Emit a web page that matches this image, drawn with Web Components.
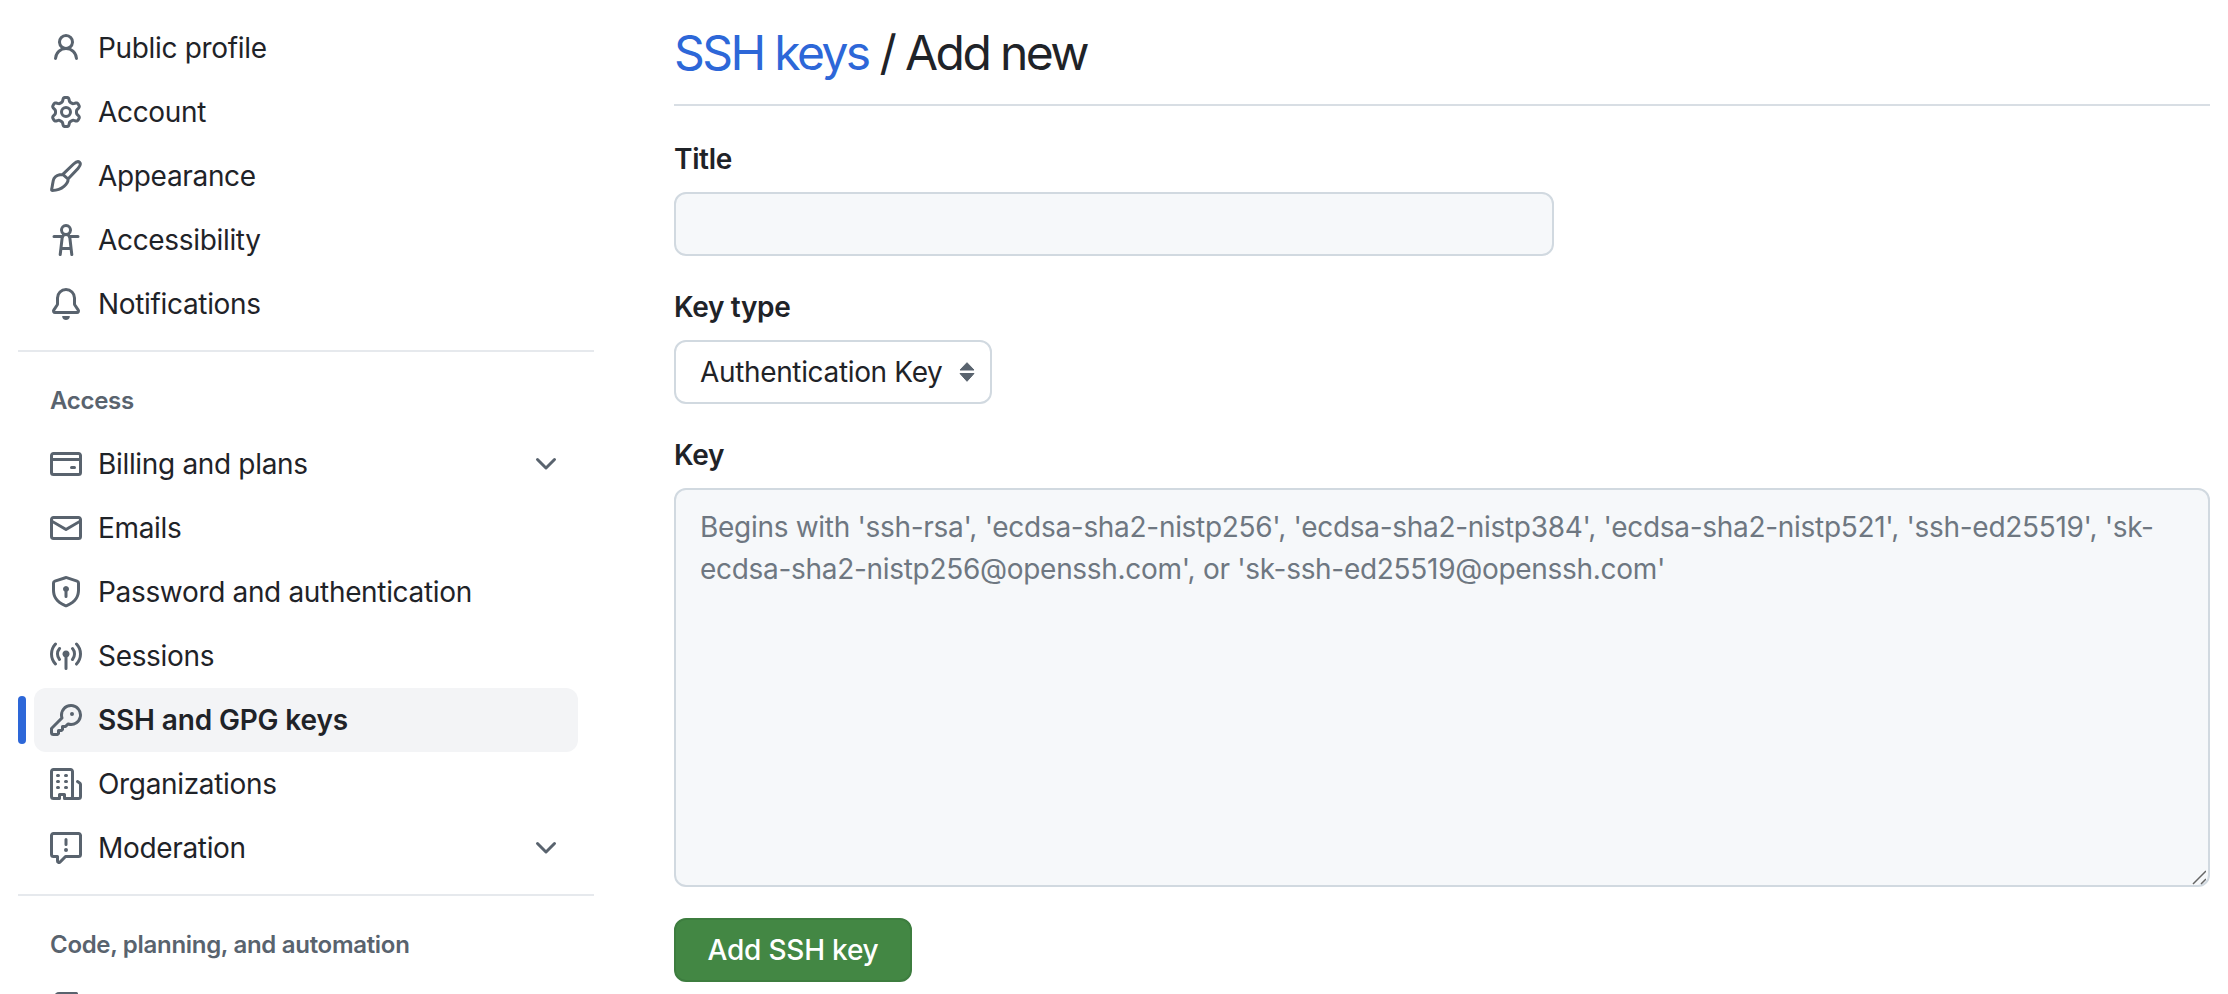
<!DOCTYPE html>
<html lang="en">
<head>
<meta charset="utf-8">
<title>SSH keys / Add new</title>
<style>
  html, body { margin: 0; height: 100%; background: #fff; overflow: hidden; }
  body { font-family: Inter, "Liberation Sans", sans-serif; font-size: 28px; color: #1f2328; }
</style>
</head>
<body>
<gh-settings-page>
  <gh-side-nav slot="nav">
    <gh-nav-item icon="person">Public profile</gh-nav-item>
    <gh-nav-item icon="gear">Account</gh-nav-item>
    <gh-nav-item icon="paintbrush">Appearance</gh-nav-item>
    <gh-nav-item icon="accessibility">Accessibility</gh-nav-item>
    <gh-nav-item icon="bell">Notifications</gh-nav-item>
    <gh-nav-divider></gh-nav-divider>
    <gh-nav-heading>Access</gh-nav-heading>
    <gh-nav-item icon="card" expandable>Billing and plans</gh-nav-item>
    <gh-nav-item icon="mail">Emails</gh-nav-item>
    <gh-nav-item icon="shield">Password and authentication</gh-nav-item>
    <gh-nav-item icon="broadcast">Sessions</gh-nav-item>
    <gh-nav-item icon="key" current>SSH and GPG keys</gh-nav-item>
    <gh-nav-item icon="organization">Organizations</gh-nav-item>
    <gh-nav-item icon="report" expandable>Moderation</gh-nav-item>
    <gh-nav-divider></gh-nav-divider>
    <gh-nav-heading>Code, planning, and automation</gh-nav-heading>
    <!-- only the top edge of this row's icon is inside the window -->
    <gh-nav-item icon="repo"></gh-nav-item>
  </gh-side-nav>
  <gh-page-title><a slot="link">SSH keys</a> / Add new</gh-page-title>
  <gh-form-field label="Title"><gh-text-input></gh-text-input></gh-form-field>
  <gh-form-field label="Key type"><gh-select-box>Authentication Key</gh-select-box></gh-form-field>
  <gh-form-field label="Key"><gh-text-area>Begins with 'ssh-rsa', 'ecdsa-sha2-nistp256', 'ecdsa-sha2-nistp384', 'ecdsa-sha2-nistp521', 'ssh-ed25519', 'sk-ecdsa-sha2-nistp256@openssh.com', or 'sk-ssh-ed25519@openssh.com'</gh-text-area></gh-form-field>
  <gh-primary-button>Add SSH key</gh-primary-button>
</gh-settings-page>

<script>
// octicons, 16 unit grid
const ICONS = {
  person: '<path d="M10.561 8.073a6.005 6.005 0 0 1 3.432 5.142.75.75 0 1 1-1.498.07 4.5 4.5 0 0 0-8.99 0 .75.75 0 1 1-1.498-.07 6.004 6.004 0 0 1 3.431-5.142 3.999 3.999 0 1 1 5.123 0ZM10.5 5a2.5 2.5 0 1 0-5 0 2.5 2.5 0 0 0 5 0Z"/>',
  gear: '<path d="M8 0a8.2 8.2 0 0 1 .701.031C9.444.095 9.99.645 10.16 1.29l.288 1.107c.018.066.079.158.212.224.231.114.454.243.668.386.123.082.233.09.299.071l1.103-.303c.644-.176 1.392.021 1.82.63.27.385.506.792.704 1.218.315.675.111 1.422-.364 1.891l-.814.806c-.049.048-.098.147-.088.294.016.257.016.515 0 .772-.01.147.038.246.088.294l.814.806c.475.469.679 1.216.364 1.891a7.977 7.977 0 0 1-.704 1.217c-.428.61-1.176.807-1.82.63l-1.102-.302c-.067-.019-.177-.011-.3.071a5.909 5.909 0 0 1-.668.386c-.133.066-.194.158-.211.224l-.29 1.106c-.168.646-.715 1.196-1.458 1.26a8.006 8.006 0 0 1-1.402 0c-.743-.064-1.289-.614-1.458-1.26l-.289-1.106c-.018-.066-.079-.158-.212-.224a5.738 5.738 0 0 1-.668-.386c-.123-.082-.233-.09-.299-.071l-1.103.303c-.644.176-1.392-.021-1.82-.63a8.12 8.12 0 0 1-.704-1.218c-.315-.675-.111-1.422.363-1.891l.815-.806c.05-.048.098-.147.088-.294a6.214 6.214 0 0 1 0-.772c.01-.147-.038-.246-.088-.294l-.815-.806C.635 6.045.431 5.298.746 4.623a7.92 7.92 0 0 1 .704-1.217c.428-.61 1.176-.807 1.82-.63l1.102.302c.067.019.177.011.3-.071.214-.143.437-.272.668-.386.133-.066.194-.158.211-.224l.29-1.106C6.009.645 6.556.095 7.299.03 7.53.01 7.764 0 8 0Zm-.571 1.525c-.036.003-.108.036-.137.146l-.289 1.105c-.147.561-.549.967-.998 1.189-.173.086-.34.183-.5.29-.417.278-.97.423-1.529.27l-1.103-.303c-.109-.03-.175.016-.195.045-.22.312-.412.644-.573.99-.014.031-.021.11.059.19l.815.806c.411.406.562.957.53 1.456a4.709 4.709 0 0 0 0 .582c.032.499-.119 1.05-.53 1.456l-.815.806c-.081.08-.073.159-.059.19.162.346.353.677.573.989.02.03.085.076.195.046l1.102-.303c.56-.153 1.113-.008 1.53.27.161.107.328.204.501.29.447.222.85.629.997 1.189l.289 1.105c.029.109.101.143.137.146a6.6 6.6 0 0 0 1.142 0c.036-.003.108-.036.137-.146l.289-1.105c.147-.561.549-.967.998-1.189.173-.086.34-.183.5-.29.417-.278.97-.423 1.529-.27l1.103.303c.109.029.175-.016.195-.045.22-.313.411-.644.573-.99.014-.031.021-.11-.059-.19l-.815-.806c-.411-.406-.562-.957-.53-1.456a4.709 4.709 0 0 0 0-.582c-.032-.499.119-1.05.53-1.456l.815-.806c.081-.08.073-.159.059-.19a6.464 6.464 0 0 0-.573-.989c-.02-.03-.085-.076-.195-.046l-1.102.303c-.56.153-1.113.008-1.53-.27a4.44 4.44 0 0 0-.501-.29c-.447-.222-.85-.629-.997-1.189l-.289-1.105c-.029-.11-.101-.143-.137-.146a6.6 6.6 0 0 0-1.142 0ZM11 8a3 3 0 1 1-6 0 3 3 0 0 1 6 0ZM9.5 8a1.5 1.5 0 1 0-3.001.001A1.5 1.5 0 0 0 9.5 8Z"/>',
  paintbrush: '<path fill="none" stroke="currentColor" stroke-width="1.5" stroke-linejoin="round" stroke-linecap="round" d="M6.4 7.2 11.8 2c1.2-1.1 2.4-1.4 3-.8s.3 1.8-.8 3L9 9.5M6.4 7.2 9 9.5M6.4 7.2C4.5 7.2 2.8 7.8 2 9.2 1.3 10.5 1.4 12.6.8 14.7c-.1.3.2.5.4.5 2.3 0 4.3-.7 5.8-2 1.4-1.2 2.2-2.4 2-3.7"/>',
  accessibility: '<path d="M9.923 5.302c.063.063.122.129.178.198H14A.75.75 0 0 1 14 7h-3.3l.578 5.163.362 2.997a.75.75 0 0 1-1.49.18L9.868 13H6.132l-.282 2.34a.75.75 0 0 1-1.49-.18l.362-2.997L5.3 7H2a.75.75 0 0 1 0-1.5h3.9a2.54 2.54 0 0 1 .176-.198 3 3 0 1 1 3.847 0ZM9.2 7.073h-.001a1.206 1.206 0 0 0-2.398 0L6.305 11.5h3.39ZM9.5 3a1.5 1.5 0 1 0-3.001.001A1.5 1.5 0 0 0 9.5 3Z"/>',
  bell: '<path d="M8 16c.9 0 1.7-.6 1.9-1.5.1-.3-.1-.5-.4-.5h-3c-.3 0-.5.2-.4.5.2.9 1 1.5 1.9 1.5ZM3 5a5 5 0 0 1 10 0v2.947c0 .05.015.098.042.139l1.703 2.555A1.519 1.519 0 0 1 13.482 13H2.518a1.516 1.516 0 0 1-1.263-2.36l1.703-2.554A.255.255 0 0 0 3 7.947Zm5-3.5A3.5 3.5 0 0 0 4.5 5v2.947c0 .346-.102.683-.294.97l-1.703 2.556a.017.017 0 0 0-.003.01l.001.006c0 .002.002.004.004.006l.006.004.007.001h10.964l.007-.001.006-.004.004-.006.001-.007a.017.017 0 0 0-.003-.01l-1.703-2.554a1.745 1.745 0 0 1-.294-.97V5A3.5 3.5 0 0 0 8 1.5Z"/>',
  card: '<path d="M10.75 9a.75.75 0 0 0 0 1.5h1.5a.75.75 0 0 0 0-1.5h-1.5Z"/><path d="M0 3.75C0 2.784.784 2 1.75 2h12.5c.966 0 1.75.784 1.75 1.75v8.5A1.75 1.75 0 0 1 14.25 14H1.75A1.75 1.75 0 0 1 0 12.25ZM14.5 6.5h-13v5.75c0 .138.112.25.25.25h12.5a.25.25 0 0 0 .25-.25Zm0-2.75a.25.25 0 0 0-.25-.25H1.75a.25.25 0 0 0-.25.25V5h13Z"/>',
  mail: '<path d="M1.75 2h12.5c.966 0 1.75.784 1.75 1.75v8.5A1.75 1.75 0 0 1 14.25 14H1.75A1.75 1.75 0 0 1 0 12.25v-8.5C0 2.784.784 2 1.75 2ZM1.5 12.251c0 .138.112.25.25.25h12.5a.25.25 0 0 0 .25-.25V5.809L8.38 9.397a.75.75 0 0 1-.76 0L1.5 5.809v6.442Zm13-8.181v-.32a.25.25 0 0 0-.25-.25H1.75a.25.25 0 0 0-.25.25v.32L8 7.88Z"/>',
  shield: '<path d="m8.533.133 5.25 1.68A1.75 1.75 0 0 1 15 3.48V7c0 1.566-.32 3.182-1.303 4.682-.983 1.498-2.585 2.813-5.032 3.855a1.697 1.697 0 0 1-1.33 0c-2.447-1.042-4.049-2.357-5.032-3.855C1.32 10.182 1 8.566 1 7V3.48a1.75 1.75 0 0 1 1.217-1.667l5.25-1.68a1.748 1.748 0 0 1 1.066 0Zm-.61 1.429.001.001-5.25 1.68a.251.251 0 0 0-.174.237V7c0 1.36.275 2.666 1.057 3.859.784 1.194 2.121 2.342 4.366 3.298a.196.196 0 0 0 .154 0c2.245-.957 3.582-2.103 4.366-3.297C13.225 9.666 13.5 8.358 13.5 7V3.48a.25.25 0 0 0-.174-.238l-5.25-1.68a.25.25 0 0 0-.153 0ZM9.5 6.5c0 .536-.286 1.032-.75 1.3v2.45a.75.75 0 0 1-1.5 0V7.8A1.5 1.5 0 1 1 9.5 6.5Z"/>',
  broadcast: '<path d="M8.75 8.582v5.668a.75.75 0 0 1-1.5 0V8.582a1.75 1.75 0 1 1 1.5 0Zm3.983-7.125a.75.75 0 0 1 1.06.026A7.976 7.976 0 0 1 16 7c0 2.139-.84 4.083-2.207 5.517a.75.75 0 1 1-1.086-1.034A6.474 6.474 0 0 0 14.5 7a6.474 6.474 0 0 0-1.793-4.483.75.75 0 0 1 .026-1.06Zm-9.466 0a.75.75 0 0 1 .026 1.06A6.474 6.474 0 0 0 1.5 7a6.47 6.47 0 0 0 1.793 4.483.75.75 0 0 1-1.086 1.034A7.973 7.973 0 0 1 0 7c0-2.139.84-4.083 2.207-5.517a.75.75 0 0 1 1.06-.026Zm8.556 2.321A4.988 4.988 0 0 1 13 7a4.988 4.988 0 0 1-1.177 3.222.75.75 0 1 1-1.146-.967A3.487 3.487 0 0 0 11.5 7c0-.86-.309-1.645-.823-2.255a.75.75 0 0 1 1.146-.967Zm-6.492.958A3.48 3.48 0 0 0 4.5 7a3.48 3.48 0 0 0 .823 2.255.75.75 0 0 1-1.146.967A4.981 4.981 0 0 1 3 7a4.982 4.982 0 0 1 1.188-3.236.75.75 0 1 1 1.143.972Z"/>',
  key: '<path d="M10.5 0a5.499 5.499 0 1 1-1.288 10.848l-.932.932a.749.749 0 0 1-.53.22H7v.75a.749.749 0 0 1-.22.53l-.5.5a.749.749 0 0 1-.53.22H5v.75a.749.749 0 0 1-.22.53l-.5.5a.749.749 0 0 1-.53.22h-2A1.75 1.75 0 0 1 0 14.25v-2c0-.199.079-.389.22-.53l4.932-4.932A5.5 5.5 0 0 1 10.5 0Zm-4 5.5c-.001.431.069.86.205 1.269a.75.75 0 0 1-.181.768L1.5 12.56v1.69c0 .138.112.25.25.25h1.69l.06-.06v-1.19a.75.75 0 0 1 .75-.75h1.19l.06-.06v-1.19a.75.75 0 0 1 .75-.75h1.19l1.023-1.025a.75.75 0 0 1 .768-.18A4 4 0 1 0 6.5 5.5ZM11 6a1 1 0 1 1 0-2 1 1 0 0 1 0 2Z"/>',
  organization: '<path d="M1.75 16A1.75 1.75 0 0 1 0 14.25V1.75C0 .784.784 0 1.75 0h8.5C11.216 0 12 .784 12 1.75v12.5c0 .085-.006.168-.018.25h2.268a.25.25 0 0 0 .25-.25V8.285a.25.25 0 0 0-.111-.208l-1.055-.703a.749.749 0 1 1 .832-1.248l1.055.703c.487.325.779.871.779 1.456v5.965A1.75 1.75 0 0 1 14.25 16h-3.5a.766.766 0 0 1-.197-.026c-.099.017-.2.026-.303.026h-3a.75.75 0 0 1-.75-.75V14h-1v1.25a.75.75 0 0 1-.75.75Zm-.25-1.75c0 .138.112.25.25.25H4v-1.25a.75.75 0 0 1 .75-.75h2.5a.75.75 0 0 1 .75.75v1.25h2.25a.25.25 0 0 0 .25-.25V1.75a.25.25 0 0 0-.25-.25h-8.5a.25.25 0 0 0-.25.25ZM3.75 6h.5a.75.75 0 0 1 0 1.5h-.5a.75.75 0 0 1 0-1.5ZM3 3.75A.75.75 0 0 1 3.75 3h.5a.75.75 0 0 1 0 1.5h-.5A.75.75 0 0 1 3 3.75Zm4 3A.75.75 0 0 1 7.75 6h.5a.75.75 0 0 1 0 1.5h-.5A.75.75 0 0 1 7 6.75ZM7.75 3h.5a.75.75 0 0 1 0 1.5h-.5a.75.75 0 0 1 0-1.5ZM3 9.75A.75.75 0 0 1 3.75 9h.5a.75.75 0 0 1 0 1.5h-.5A.75.75 0 0 1 3 9.75ZM7.75 9h.5a.75.75 0 0 1 0 1.5h-.5a.75.75 0 0 1 0-1.5Z"/>',
  report: '<path d="M0 1.75C0 .784.784 0 1.75 0h12.5C15.216 0 16 .784 16 1.75v9.5A1.75 1.75 0 0 1 14.25 13H8.06l-2.573 2.573A1.458 1.458 0 0 1 3 14.543V13H1.75A1.75 1.75 0 0 1 0 11.25Zm1.75-.25a.25.25 0 0 0-.25.25v9.5c0 .138.112.25.25.25h2a.75.75 0 0 1 .75.75v2.19l2.72-2.72a.749.749 0 0 1 .53-.22h6.5a.25.25 0 0 0 .25-.25v-9.5a.25.25 0 0 0-.25-.25Zm7 2.25v2.5a.75.75 0 0 1-1.5 0v-2.5a.75.75 0 0 1 1.5 0ZM9 9a1 1 0 1 1-2 0 1 1 0 0 1 2 0Z"/>',
  repo: '<path d="M2 2.5A2.5 2.5 0 0 1 4.5 0h8.75a.75.75 0 0 1 .75.75v12.5a.75.75 0 0 1-.75.75h-2.5a.75.75 0 0 1 0-1.5h1.75v-2h-8a1 1 0 0 0-.714 1.7.75.75 0 1 1-1.072 1.05A2.495 2.495 0 0 1 2 11.5Zm10.5-1h-8a1 1 0 0 0-1 1v6.708A2.486 2.486 0 0 1 4.5 9h8ZM5 12.25a.25.25 0 0 1 .25-.25h3.5a.25.25 0 0 1 .25.25v3.25a.25.25 0 0 1-.4.2l-1.45-1.087a.249.249 0 0 0-.3 0L5.4 15.7a.25.25 0 0 1-.4-.2Z"/>',
  chevron: '<path d="M12.78 5.22a.749.749 0 0 1 0 1.06l-4.25 4.25a.749.749 0 0 1-1.06 0L3.22 6.28a.749.749 0 1 1 1.06-1.06L8 8.939l3.72-3.719a.749.749 0 0 1 1.06 0Z"/>'
};

const svgIcon = (name) => `<svg viewBox="0 0 16 16" width="32" height="32" fill="currentColor" aria-hidden="true">${ICONS[name]}</svg>`;

class GhElement extends HTMLElement {
  constructor() {
    super();
    this.attachShadow({ mode: 'open' });
  }

  connectedCallback() {
    this.shadowRoot.innerHTML = this.markup();
  }
}

class GhSettingsPage extends GhElement {
  markup() {
    return `
      <style>
        :host { display: flex; height: 994px; overflow: hidden; gap: 80px; padding-left: 18px; box-sizing: border-box; }
        .nav { flex: 0 0 576px; }
        main { flex: 0 0 1536px; min-width: 0; }
      </style>
      <div class="nav"><slot name="nav"></slot></div>
      <main><slot></slot></main>
    `;
  }
}

class GhSideNav extends GhElement {
  markup() {
    return `
      <style>
        :host { display: block; padding-top: 16px; }
      </style>
      <slot></slot>
    `;
  }
}

class GhNavItem extends GhElement {
  markup() {
    const current = this.hasAttribute('current');
    return `
      <style>
        :host { display: block; position: relative; margin-left: 16px; width: 544px; }
        .row { display: flex; align-items: center; gap: 16px; height: 64px; padding: 0 16px; box-sizing: border-box; border-radius: 12px; color: #1f2328; font-size: 28px; letter-spacing: -0.33px; }
        .row.current { background: #f3f4f6; font-weight: 600; letter-spacing: -0.15px; }
        svg { flex: none; color: #59636e; display: block; }
        .label { flex: 1; white-space: nowrap; }
        .bar { position: absolute; left: -16px; top: 8px; width: 8px; height: 48px; border-radius: 6px; background: #2d67d8; }
      </style>
      ${current ? '<span class="bar"></span>' : ''}
      <div class="row ${current ? 'current' : ''}">
        ${svgIcon(this.getAttribute('icon'))}
        <span class="label"><slot></slot></span>
        ${this.hasAttribute('expandable') ? svgIcon('chevron') : ''}
      </div>
    `;
  }
}

class GhNavDivider extends GhElement {
  markup() {
    return `
      <style>
        :host { display: block; height: 2px; margin: 14px 0 0; background: #e6e9ed; }
      </style>
    `;
  }
}

class GhNavHeading extends GhElement {
  markup() {
    return `
      <style>
        :host { display: block; margin: 29px 0 11px 32px; height: 40px; line-height: 40px; font-size: 24px; font-weight: 600; color: #59636e; letter-spacing: -0.3px; white-space: nowrap; }
      </style>
      <slot></slot>
    `;
  }
}

class GhPageTitle extends GhElement {
  markup() {
    return `
      <style>
        :host { display: block; box-sizing: border-box; height: 106px; padding-top: 24px; line-height: 58px; font-size: 48px; font-weight: 400; color: #1f2328; border-bottom: 2px solid #d8dee4; margin-bottom: 34px; letter-spacing: -2.6px; white-space: nowrap; }
        ::slotted(a) { color: #2d67d8; text-decoration: none; }
      </style>
      <slot name="link"></slot><slot></slot>
    `;
  }
}

class GhFormField extends GhElement {
  markup() {
    return `
      <style>
        :host { display: block; margin-bottom: 32px; }
        label { display: block; height: 38px; line-height: 38px; margin-bottom: 14px; font-size: 28px; font-weight: 600; color: #1f2328; letter-spacing: -0.35px; }
      </style>
      <label>${this.getAttribute('label')}</label>
      <slot></slot>
    `;
  }
}

class GhTextInput extends GhElement {
  markup() {
    return `
      <style>
        :host { display: block; box-sizing: border-box; width: 880px; height: 64px; background: #f6f8fa; border: 2px solid #d1d9e0; border-radius: 12px; }
      </style>
    `;
  }
}

class GhSelectBox extends GhElement {
  markup() {
    return `
      <style>
        :host { display: inline-flex; align-items: center; box-sizing: border-box; width: 318px; height: 64px; padding: 0 15px 0 24px; justify-content: space-between; vertical-align: top; background: #fff; border: 2px solid #d1d9e0; border-radius: 12px; font-size: 28px; color: #1f2328; letter-spacing: -0.35px; white-space: nowrap; }
        svg { flex: none; display: block; color: #59636e; }
      </style>
      <slot></slot>
      <svg viewBox="0 0 16 20" width="16" height="20" fill="currentColor" stroke="currentColor" stroke-width="1" stroke-linejoin="round" aria-hidden="true"><path d="M8 .7 15 8H1ZM8 19.3 1 11.5h14Z"/></svg>
    `;
  }
}

class GhTextArea extends GhElement {
  markup() {
    return `
      <style>
        :host { display: block; position: relative; box-sizing: border-box; height: 399px; padding: 16px 24px; background: #f6f8fa; border: 2px solid #d1d9e0; border-radius: 12px; font-size: 28px; line-height: 42px; color: #6e7781; letter-spacing: -0.3px; }
        svg { position: absolute; right: 2px; bottom: 0; display: block; color: #666; }
      </style>
      <slot></slot>
      <svg viewBox="0 0 16 16" width="16" height="16" fill="none" stroke="currentColor" stroke-width="1.5" aria-hidden="true"><path d="M3 15 16 2M11 15l5-5"/></svg>
    `;
  }
}

class GhPrimaryButton extends GhElement {
  markup() {
    return `
      <style>
        :host { display: inline-flex; align-items: center; justify-content: center; box-sizing: border-box; width: 238px; height: 64px; margin-top: -1px; background: #438744; border: 2px solid #3d7d3f; border-radius: 12px; color: #fff; font-size: 28px; font-weight: 500; letter-spacing: -0.2px; white-space: nowrap; }
      </style>
      <slot></slot>
    `;
  }
}

customElements.define('gh-settings-page', GhSettingsPage);
customElements.define('gh-side-nav', GhSideNav);
customElements.define('gh-nav-item', GhNavItem);
customElements.define('gh-nav-divider', GhNavDivider);
customElements.define('gh-nav-heading', GhNavHeading);
customElements.define('gh-page-title', GhPageTitle);
customElements.define('gh-form-field', GhFormField);
customElements.define('gh-text-input', GhTextInput);
customElements.define('gh-select-box', GhSelectBox);
customElements.define('gh-text-area', GhTextArea);
customElements.define('gh-primary-button', GhPrimaryButton);
</script>
</body>
</html>
